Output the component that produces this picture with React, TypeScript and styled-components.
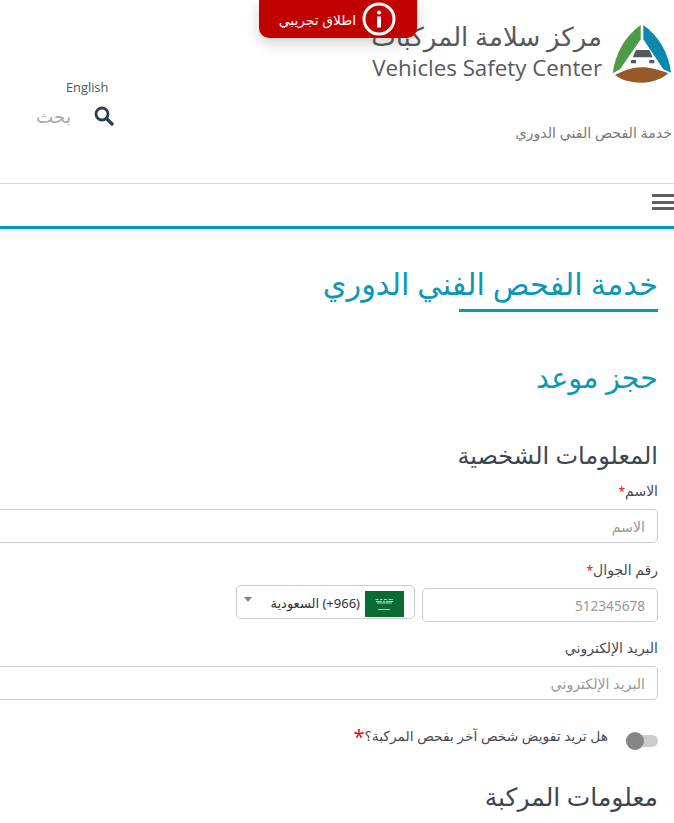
import React from "react";
import styled, { createGlobalStyle } from "styled-components";

const Global = createGlobalStyle`
  html, body { margin: 0; padding: 0; background: #fff; }
  body { font-family: "Noto Sans", "DejaVu Sans", sans-serif; overflow: hidden; }
  * { box-sizing: border-box; }
`;
const Page = styled.div`
  position: relative; width: 674px; height: 823px; overflow: hidden; direction: rtl; background: #fff;
`;
const Ribbon = styled.div`
  position: absolute; top: 0; left: 259px; width: 158px; height: 38px;
  display: flex; align-items: center; gap: 6px; padding-right: 21px;
  background: #c10000; color: #fff; font-size: 13.8px;
  border-radius: 0 0 10px 10px; box-shadow: 0 5px 14px rgba(0,0,0,.18);
`;
const Header = styled.header`
  height: 183px; display: flex; justify-content: space-between; align-items: flex-start; padding-top: 22px;
`;
const Brand = styled.div`
  display: flex; flex-direction: column; align-items: flex-end; width: 320px;
`;
const LogoRow = styled.div`
  display: flex; gap: 10px; align-items: flex-start; direction: rtl; width: 100%; padding-right: 2px;
`;
const LogoText = styled.div`
  display: flex; flex-direction: column; color: #58595b;
`;
const LogoAr = styled.div`
  font-size: 26px; line-height: 30px; height: 33px; margin-top: -1px; white-space: nowrap; text-align: right; letter-spacing: -.4px;
`;
const LogoEn = styled.div`
  direction: ltr; text-align: right; font-family: "Open Sans", sans-serif; font-size: 22.3px; line-height: 28px; white-space: nowrap;
`;
const Tagline = styled.div`
  align-self: flex-start; width: 100%; margin-top: 39px; padding-right: 2px; font-size: 14.2px; line-height: 20px; color: #777; white-space: nowrap; text-align: right;
`;
const Tools = styled.div`
  width: 160px; display: flex; flex-direction: column; align-items: flex-end; padding: 57px 0 0 36px;
`;
const Lang = styled.a`
  margin-left: 30px; font-family: "Open Sans", sans-serif; font-size: 12.8px; line-height: 16px; color: #4a5560;
`;
const SearchRow = styled.div`
  margin-top: 9px; display: flex; align-items: center; gap: 23px; direction: rtl; align-self: flex-end;
`;
const SearchHint = styled.span`
  font-size: 18.4px; line-height: 24px; color: #aaa;
`;
const NavBar = styled.nav`
  height: 46px; border-top: 1px solid #d8d8d8; border-bottom: 3px solid #0099b8; padding: 10px 0 0 0; display: flex; justify-content: flex-start;
  box-shadow: 0 2px 3px rgba(0,0,0,.1);
`;
const Burger = styled.button`
  width: 22px; height: 16px; padding: 0; border: 0; background: none; display: flex; flex-direction: column; justify-content: space-between;
  & > i { display: block; height: 3px; background: #5f5f5f; }
`;
const Main = styled.main`
  padding: 0 16px 0 0; width: 720px; margin-left: -46px;
`;
const PageTitle = styled.h1`
  margin: 35px 0 0; font-weight: 400; font-size: 30.4px; line-height: 40px; color: #0b98b7; padding-bottom: 5px;
`;
const TitleRule = styled.div`
  width: 199px; height: 3px; background: #0b98b7;
`;
const SubTitle = styled.h2`
  margin: 45px 0 0; font-weight: 400; font-size: 28.7px; line-height: 40px; color: #0b98b7;
`;
const SectionTitle = styled.h3<{ $top: number; $size: number }>`
  margin: ${p => p.$top}px 0 0; font-weight: 400; font-size: ${p => p.$size}px; line-height: 32px; color: #3c4650;
`;
const Field = styled.div<{ $top: number }>`
  margin-top: ${p => p.$top}px;
`;
const Label = styled.label`
  display: block; height: 18px; font-size: 14px; line-height: 18px; color: #454c53;
`;
const Star = styled.span`
  color: #e01010; font-size: 12px;
`;
const Input = styled.input<{ $w?: number }>`
  display: block; width: ${p => (p.$w ? `${p.$w}px` : "100%")}; height: 34px; margin-top: 9px; padding: 0 12px;
  border: 1px solid #ccc; border-radius: 5px; font: inherit; font-size: 14.2px; background: #fff; outline: none; direction: rtl;
  &::placeholder { color: #999; opacity: 1; }
`;
const PhoneInput = styled(Input)`
  font-size: 13.6px;
`;
const PhoneRow = styled.div`
  display: flex; align-items: flex-start; gap: 7px;
`;
const Select = styled.div`
  width: 179px; height: 34px; margin-top: 6px; border: 1px solid #ccc; border-radius: 5px; display: flex; align-items: center; padding: 2px 10px 0 7px; background: #fff;
`;
const Flag = styled.svg`
  width: 39px; height: 26px; display: block; flex: none; margin-top: 1px;
`;
const Country = styled.span`
  margin-right: 5px; font-size: 13px; color: #333; white-space: nowrap;
`;
const Caret = styled.span`
  margin-right: auto; margin-bottom: 8px; width: 0; height: 0; border-left: 4px solid transparent; border-right: 4px solid transparent; border-top: 5px solid #888;
`;
const ToggleRow = styled.div`
  display: flex; align-items: center; gap: 18px; margin-top: 24px; height: 28px;
`;
const Toggle = styled.div`
  position: relative; width: 32px; height: 12px; border-radius: 6px; background: #ccc; margin-top: 5px;
  & > i { position: absolute; top: -3px; right: 14px; width: 18px; height: 18px; border-radius: 50%; background: #868686; }
`;
const ToggleLabel = styled.span`
  font-size: 13.8px; line-height: 18px; color: #454c53; margin-bottom: 5px;
`;
const BigStar = styled.span`
  color: #e01010; font-size: 20px; line-height: 14px; vertical-align: middle;
`;

const Logo = () => (
  <svg width="60" height="62" viewBox="0 0 60 62" style={{ flex: "none", display: "block" }}>
    <path d="M28.7 3 L28.7 17.3 L8 47.3 L0.7 51.3 C3 32 13 14 28.7 3Z" fill="#4d9a48" />
    <path d="M31.3 3 L31.3 17.3 L51.3 47.3 L59 50.7 C57 32 47 14 31.3 3Z" fill="#0a88b0" />
    <path d="M3 53 C12 48 21 45.3 29.7 45.3 C38 45.3 48 48 56.3 51.3 C50 57 40 60.7 29.7 60.7 C19 60.7 9 58 3 53Z" fill="#97592a" />
    <path d="M24 28 H37.3 L40.7 35.3 H20.7Z" fill="#58595b" />
    <path d="M19 38 H24 V41.3 H19Z M37.3 38 H42.3 V41.3 H37.3Z" fill="#58595b" />
  </svg>
);

const Info = () => (
  <svg width="34" height="34" viewBox="0 0 34 34" style={{ flex: "none" }}>
    <circle cx="17" cy="17" r="15" fill="none" stroke="#fff" strokeWidth="3" />
    <circle cx="17" cy="10.5" r="2.1" fill="#fff" />
    <rect x="15" y="14.5" width="4" height="11" fill="#fff" />
  </svg>
);

const Search = () => (
  <svg width="20" height="20" viewBox="0 0 20 20" style={{ flex: "none" }}>
    <circle cx="8" cy="8" r="6" fill="none" stroke="#2d3e50" strokeWidth="2.8" />
    <path d="M12.5 12.5 L18 18" stroke="#2d3e50" strokeWidth="3.4" strokeLinecap="round" />
  </svg>
);

const SaudiFlag = () => (
  <Flag viewBox="0 0 39 26">
    <rect width="39" height="26" fill="#0b6b35" />
    <path d="M10.5 8.5h3M15 8.5h2.5M19 8.5h3M23.5 8.5h4.5M11 10.5h6M18 10.5h2M21 10.5h7M12 12h15" stroke="#b5d1bd" strokeWidth="1.2" fill="none" />
    <path d="M13 18.5h12" stroke="#cfe2d6" strokeWidth=".8" />
  </Flag>
);

export default function App() {
  return (
    <Page>
      <Global />
      <Ribbon><Info /><span>اطلاق تجريبي</span></Ribbon>
      <Header>
        <Brand>
          <LogoRow>
            <Logo />
            <LogoText>
              <LogoAr>مركز سلامة المركبات</LogoAr>
              <LogoEn>Vehicles Safety Center</LogoEn>
            </LogoText>
          </LogoRow>
          <Tagline>خدمة الفحص الفني الدوري</Tagline>
        </Brand>
        <Tools>
          <Lang>English</Lang>
          <SearchRow><Search /><SearchHint>بحث</SearchHint></SearchRow>
        </Tools>
      </Header>
      <NavBar><Burger aria-label="menu"><i /><i /><i /></Burger></NavBar>
      <Main>
        <PageTitle>خدمة الفحص الفني الدوري</PageTitle>
        <TitleRule />
        <SubTitle>حجز موعد</SubTitle>
        <SectionTitle $top={42} $size={24}>المعلومات الشخصية</SectionTitle>
        <Field $top={11}>
          <Label>الاسم<Star>*</Star></Label>
          <Input placeholder="الاسم" />
        </Field>
        <Field $top={18}>
          <Label>رقم الجوال<Star>*</Star></Label>
          <PhoneRow>
            <PhoneInput $w={236} placeholder="512345678" />
            <Select>
              <SaudiFlag />
              <Country>(966+) السعودية</Country>
              <Caret />
            </Select>
          </PhoneRow>
        </Field>
        <Field $top={17}>
          <Label>البريد الإلكتروني</Label>
          <Input placeholder="البريد الإلكتروني" />
        </Field>
        <ToggleRow>
          <Toggle><i /></Toggle>
          <ToggleLabel>هل تريد تفويض شخص آخر بفحص المركبة؟<BigStar>*</BigStar></ToggleLabel>
        </ToggleRow>
        <SectionTitle $top={28} $size={25}>معلومات المركبة</SectionTitle>
      </Main>
    </Page>
  );
}
